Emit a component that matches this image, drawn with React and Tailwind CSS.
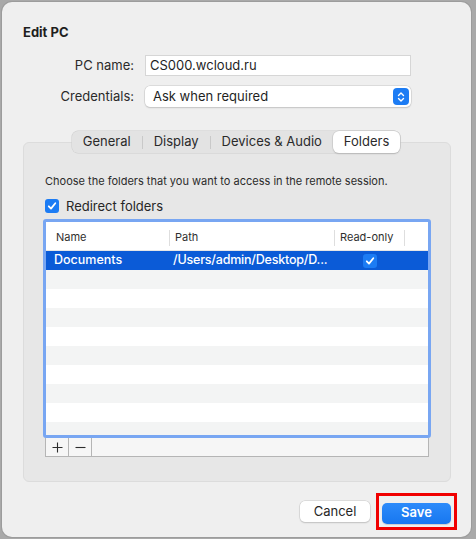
import { useState } from 'react';

const FONT = { fontFamily: 'Inter, "Noto Sans", "Liberation Sans", sans-serif' };

const TABS = ['General', 'Display', 'Devices & Audio', 'Folders'];

function Check({ checked }) {
  return (
    <span
      className={`flex items-center justify-center rounded-[3px] w-[14px] h-[14px] ${
        checked ? 'bg-[#1c7cf4]' : 'bg-white border border-[#b9b9b9]'
      }`}
    >
      {checked && (
        <svg width="10" height="10" viewBox="0 0 10 10" fill="none">
          <path d="M1.8 5.3 L4 7.6 L8.3 2.3" stroke="white" strokeWidth="1.8" strokeLinecap="round" strokeLinejoin="round" />
        </svg>
      )}
    </span>
  );
}

export default function App() {
  const [tab, setTab] = useState('Folders');
  const [redirect, setRedirect] = useState(true);

  const rows = Array.from({ length: 9 });

  return (
    <div className="w-[476px] h-[539px] bg-[#a9a9a9] pl-[2px] pt-[2px] overflow-hidden" style={FONT}>
      <div className="w-[469px] h-[535px] bg-[#efefef] rounded-[10px] flex flex-col text-[#262626] shadow-[0_0_0_1px_#9c9c9c]">
        {/* title */}
        <div className="pt-[22px] pl-[21px] text-[13px] leading-[16px] font-bold text-[#1e1e1e]">Edit PC</div>

        {/* form */}
        <div className="mt-[15px] grid grid-cols-[132px_266px] gap-x-[11px] gap-y-[10px] items-center">
          <div className="text-right text-[13px] text-[#2a2a2a]">PC name:</div>
          <div className="h-[21px] bg-white border border-[#d6d6d6] flex items-center pl-[4px] text-[13px] text-[#1f1f1f]">
            CS000.wcloud.ru
          </div>
          <div className="text-right text-[13px] text-[#2a2a2a]">Credentials:</div>
          <div className="h-[21px] bg-white rounded-[5px] shadow-[0_0_0_0.5px_#c8c8c8,0_1px_1.5px_rgba(0,0,0,0.18)] flex items-center justify-between pl-[8px] pr-[2px] text-[13px] text-[#1f1f1f]">
            <span>Ask when required</span>
            <span className="w-[16px] h-[17px] rounded-[4px] bg-[#1c7cf4] flex items-center justify-center">
              <svg width="8" height="12" viewBox="0 0 8 12" fill="none">
                <path d="M1.5 4.5 L4 2 L6.5 4.5 M1.5 7.5 L4 10 L6.5 7.5" stroke="white" strokeWidth="1.4" strokeLinecap="round" strokeLinejoin="round" />
              </svg>
            </span>
          </div>
        </div>

        {/* tabs */}
        <div className="mt-[24px] flex justify-center relative z-10 pr-[1px]">
          <div className="h-[22px] flex items-center bg-[#e3e3e3] rounded-[6px] shadow-[0_0_0_0.5px_#cdcdcd] text-[13px]">
            {TABS.map((t, i) => {
              const active = tab === t;
              const nextActive = TABS[i + 1] === tab;
              return (
                <button
                  key={t}
                  onClick={() => setTab(t)}
                  className={`h-[22px] flex items-center text-[#2a2a2a] ${
                    active
                      ? 'bg-white rounded-[6px] shadow-[0_0_0_0.5px_#c4c4c4,0_1px_1.5px_rgba(0,0,0,0.2)] px-[11px]'
                      : 'px-[11px]'
                  }`}
                >
                  <span>{t}</span>
                  {!active && !nextActive && i < TABS.length - 1 && (
                    <span className="ml-[11px] -mr-[11px] w-px h-[13px] bg-[#c9c9c9]" />
                  )}
                </button>
              );
            })}
          </div>
        </div>

        {/* group box */}
        <div className="-mt-[11px] ml-[21px] w-[428px] h-[340px] bg-[#e7e7e7] border border-[#dcdcdc] rounded-[6px] pt-[31px] pl-[21px]">
          <div className="text-[11px] leading-[14px] text-[#2b2b2b]">
            Choose the folders that you want to access in the remote session.
          </div>
          <label className="mt-[10px] flex items-center gap-[7px] cursor-pointer" onClick={() => setRedirect(!redirect)}>
            <Check checked={redirect} />
            <span className="text-[13px] leading-[16px] text-[#262626]">Redirect folders</span>
          </label>

          {/* table */}
          <div className="mt-[5px] -ml-[2px] w-[388px]">
            <div className="w-[388px] h-[219px] rounded-[3px] border-[3px] border-[#78a6f2] bg-white overflow-hidden">
              <div className="h-[29px] pt-[3px] flex items-center text-[11px] text-[#2f2f2f] border-b border-[#e6e6e6]">
                <div className="w-[123px] pl-[10px] flex items-center h-full">Name</div>
                <div className="w-px h-[16px] bg-[#dedede]" />
                <div className="w-[164px] pl-[5px] flex items-center h-full">Path</div>
                <div className="w-px h-[16px] bg-[#dedede]" />
                <div className="w-[69px] pl-[5px] flex items-center h-full">Read-only</div>
                <div className="w-px h-[16px] bg-[#dedede]" />
              </div>
              <div className="h-[19px] bg-[#0b5bd7] flex items-center text-[12.5px] text-white">
                <div className="w-[124px] pl-[8px] font-medium">Documents</div>
                <div className="w-[165px] pl-[3px] font-medium whitespace-nowrap tracking-[-0.2px]">/Users/admin/Desktop/D...</div>
                <div className="w-[69px] flex justify-center">
                  <Check checked />
                </div>
              </div>
              {rows.map((_, i) => (
                <div key={i} className={`h-[19px] ${i % 2 === 0 ? 'bg-[#f3f4f4]' : 'bg-white'}`} />
              ))}
            </div>
            <div className="ml-[2px] w-[384px] h-[19px] flex border border-t-0 border-[#b5b5b5] bg-[#f6f6f6]">
              <button className="w-[23px] border-r border-[#b5b5b5] flex items-center justify-center">
                <svg width="11" height="11" viewBox="0 0 11 11">
                  <path d="M5.5 0.5 V10.5 M0.5 5.5 H10.5" stroke="#2d2d2d" strokeWidth="1.1" />
                </svg>
              </button>
              <button className="w-[23px] border-r border-[#b5b5b5] flex items-center justify-center">
                <svg width="11" height="11" viewBox="0 0 11 11">
                  <path d="M0.5 5.5 H10.5" stroke="#2d2d2d" strokeWidth="1.1" />
                </svg>
              </button>
            </div>
          </div>
        </div>

        {/* buttons */}
        <div className="mt-[19px] flex justify-end items-center pr-[20px] gap-[12px]">
          <button className="w-[70px] h-[21px] rounded-[5px] bg-white shadow-[0_0_0_0.5px_#c8c8c8,0_1px_1.5px_rgba(0,0,0,0.2)] text-[13px] text-[#262626]">
            Cancel
          </button>
          <div className="-my-[8px] -mx-[6px] p-[3px] border-[3px] border-[#f00000]">
            <button className="w-[69px] h-[21px] rounded-[5px] bg-[linear-gradient(#2d8bfa,#1777f0)] text-[13px] font-semibold text-white shadow-[0_1px_1px_rgba(0,0,0,0.15)]">
              Save
            </button>
          </div>
        </div>
      </div>
    </div>
  );
}
